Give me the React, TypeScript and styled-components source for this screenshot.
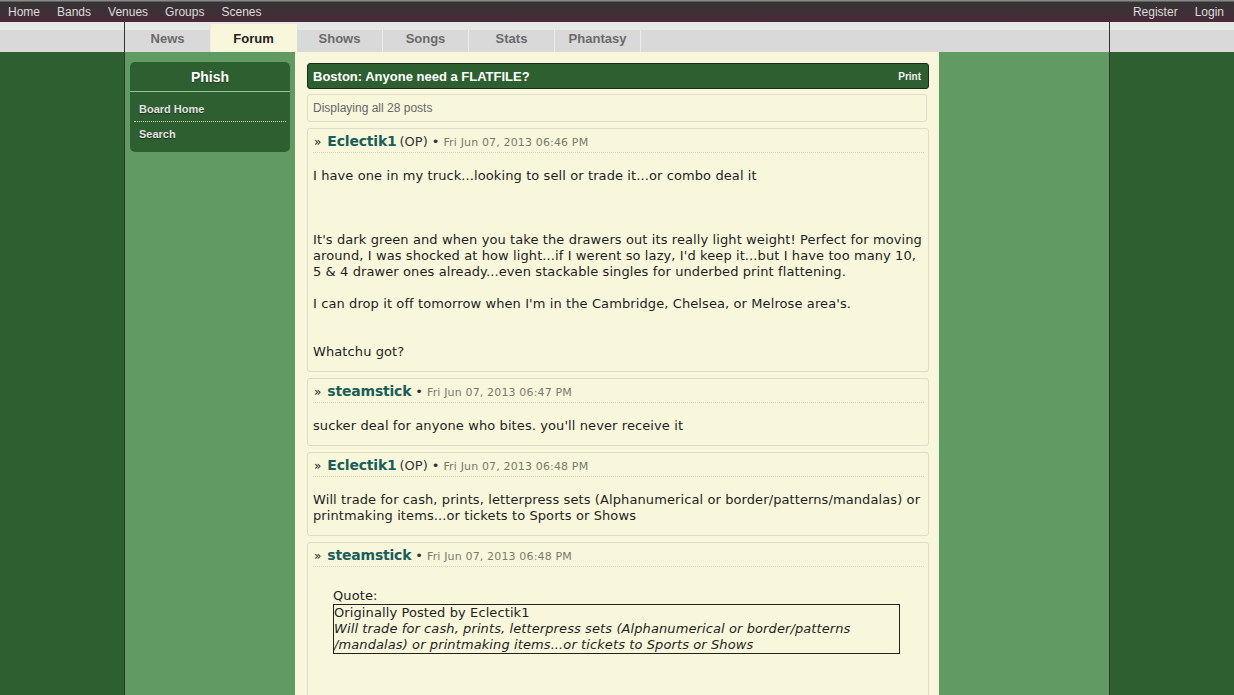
import React from "react";
import styled, { createGlobalStyle } from "styled-components";

const Global = createGlobalStyle`
  html, body { margin: 0; padding: 0; }
  body {
    background: linear-gradient(to bottom, #3a3838 0, #472a36 22px, #e6e8e6 22px, #e6e8e6 30px, #d9d9d9 30px, #d9d9d9 52px, #2e5f30 52px);
    min-height: 695px;
    font-family: "Liberation Sans", Arial, sans-serif;
  }
`;

const TopBar = styled.div`
  height: 22px;
  display: flex;
  align-items: center;
  justify-content: space-between;
  background: linear-gradient(to bottom, #8a8a8a 0, #8a8a8a 1px, #353535 2px, #482a37 22px);
`;

const NavGroup = styled.div`
  display: flex;
  padding-right: 1px;
`;

const NavLink = styled.a`
  color: #dcdcdc;
  font-size: 12px;
  padding: 1px 8px 0;
  line-height: 22px;
  text-decoration: none;
  margin-right: 1px;
`;

const Container = styled.div`
  width: 984px;
  margin: 0 auto;
  border-left: 1px solid #333;
  border-right: 1px solid #333;
  min-height: 673px;
  background: linear-gradient(to bottom, #e6e8e6 0, #e6e8e6 8px, #d9d9d9 8px, #d9d9d9 30px, transparent 30px);
`;

const Tabs = styled.div`
  display: flex;
  align-items: flex-end;
  height: 30px;
`;

const Tab = styled.div<{ $active?: boolean }>`
  width: 86px;
  box-sizing: border-box;
  text-align: center;
  font-size: 13px;
  font-weight: bold;
  line-height: 16px;
  height: ${(p) => (p.$active ? 28 : 22)}px;
  padding-top: ${(p) => (p.$active ? 7 : 1)}px;
  color: ${(p) => (p.$active ? "#222" : "#6a6a6a")};
  background: ${(p) => (p.$active ? "#f8f7dc" : "#d9d9d9")};
  border-right: 1px solid ${(p) => (p.$active ? "#f8f7dc" : "#ececec")};
`;

const Columns = styled.div`
  display: grid;
  grid-template-columns: 170px 644px 170px;
  min-height: 643px;
`;

const SideCol = styled.div`
  background: #629a64;
  padding: 10px 5px 0;
`;

const Main = styled.div`
  background: #f8f7dc;
  padding: 11px 10px 0 12px;
`;

const SideBox = styled.div`
  background: #2e5f30;
  border-radius: 5px;
  padding-bottom: 6px;
`;

const SideHead = styled.div`
  color: #fff;
  font-size: 14px;
  font-weight: bold;
  text-align: center;
  height: 28px;
  padding-top: 1px;
  line-height: 28px;
  border-bottom: 1px solid #93c493;
  text-shadow: 0 1px 1px rgba(0,0,0,0.4);
`;

const SideLinks = styled.div`
  padding-top: 5px;
`;

const SideLink = styled.div<{ $last?: boolean }>`
  margin: 0 4px;
  padding: 0 5px;
  font-size: 11px;
  font-weight: bold;
  color: #e2e2e2;
  line-height: 24px;
  height: 24px;
  text-shadow: 0 1px 1px rgba(0,0,0,0.5);
  border-bottom: ${(p) => (p.$last ? "none" : "1px dotted #cfd8c8")};
`;

const TitleBar = styled.div`
  display: flex;
  justify-content: space-between;
  align-items: center;
  height: 24px;
  background: #2e5f30;
  border: 1px solid #1b2b1b;
  border-radius: 3px;
  padding: 0 7px 0 5px;
  color: #fff;
  font-weight: bold;
`;

const Title = styled.span`
  font-size: 13px;
`;

const PrintLink = styled.span`
  font-size: 10px;
  color: #f0f0f0;
`;

const InfoBox = styled.div`
  margin: 5px 2px 6px 0;
  height: 26px;
  line-height: 26px;
  border: 1px solid #dcdcc8;
  border-radius: 3px;
  padding-left: 5px;
  font-size: 12px;
  color: #666;
`;

const Post = styled.div`
  border: 1px solid #dcdcc8;
  border-radius: 3px;
  margin-bottom: 6px;
  font-family: Verdana, "DejaVu Sans", sans-serif;
`;

const PostHead = styled.div`
  margin: 0 4px 0 5px;
  padding: 4px 0 3px 1px;
  line-height: 16px;
  height: 16px;
  border-bottom: 1px dotted #d6d6c0;
  display: flex;
  align-items: baseline;
  white-space: nowrap;
`;

const Raquo = styled.span`
  font-size: 12px;
  color: #222;
  margin-right: 6px;
`;

const Author = styled.span`
  font-size: 14px;
  font-weight: bold;
  color: #1b5d5b;
  letter-spacing: -0.2px;
`;

const OP = styled.span`
  font-size: 13px;
  color: #333;
  margin-left: 3px;
`;

const Dot = styled.span`
  font-size: 13px;
  color: #333;
  margin: 0 4px;
`;

const Date = styled.span`
  font-size: 11px;
  color: #7a7a6a;
  letter-spacing: 0.15px;
`;

const PostBody = styled.div`
  padding: 15px 6px 11px 5px;
  font-size: 13px;
  line-height: 16px;
  letter-spacing: 0.1px;
  color: #1e1e1e;
`;

const QuoteWrap = styled.div`
  margin: 6px 22px 40px 20px;
`;

const QuoteBox = styled.div`
  border: 1px solid #222;
  padding: 0;
`;

const Italic = styled.div`
  font-style: italic;
`;

type P = { author: string; op?: boolean; date: string; children: React.ReactNode };

function PostItem({ author, op, date, children }: P) {
  return (
    <Post>
      <PostHead>
        <Raquo>»</Raquo>
        <Author>{author}</Author>
        {op && <OP>(OP)</OP>}
        <Dot>•</Dot>
        <Date>{date}</Date>
      </PostHead>
      <PostBody>{children}</PostBody>
    </Post>
  );
}

export default function App() {
  const tabs = ["News", "Forum", "Shows", "Songs", "Stats", "Phantasy"];
  return (
    <>
      <Global />
      <TopBar>
        <NavGroup>
          {["Home", "Bands", "Venues", "Groups", "Scenes"].map((n) => (
            <NavLink key={n}>{n}</NavLink>
          ))}
        </NavGroup>
        <NavGroup>
          <NavLink>Register</NavLink>
          <NavLink>Login</NavLink>
        </NavGroup>
      </TopBar>
      <Container>
        <Tabs>
          {tabs.map((t) => (
            <Tab key={t} $active={t === "Forum"}>{t}</Tab>
          ))}
        </Tabs>
        <Columns>
          <SideCol>
            <SideBox>
              <SideHead>Phish</SideHead>
              <SideLinks>
                <SideLink>Board Home</SideLink>
                <SideLink $last>Search</SideLink>
              </SideLinks>
            </SideBox>
          </SideCol>
          <Main>
            <TitleBar>
              <Title>Boston: Anyone need a FLATFILE?</Title>
              <PrintLink>Print</PrintLink>
            </TitleBar>
            <InfoBox>Displaying all 28 posts</InfoBox>
            <PostItem author="Eclectik1" op date="Fri Jun 07, 2013 06:46 PM">
              I have one in my truck...looking to sell or trade it...or combo deal it
              <br /><br /><br /><br />
              It's dark green and when you take the drawers out its really light weight! Perfect for moving around, I was shocked at how light...if I werent so lazy, I'd keep it...but I have too many 10, 5 &amp; 4 drawer ones already...even stackable singles for underbed print flattening.
              <br /><br />
              I can drop it off tomorrow when I'm in the Cambridge, Chelsea, or Melrose area's.
              <br /><br /><br />
              Whatchu got?
            </PostItem>
            <PostItem author="steamstick" date="Fri Jun 07, 2013 06:47 PM">
              sucker deal for anyone who bites. you'll never receive it
            </PostItem>
            <PostItem author="Eclectik1" op date="Fri Jun 07, 2013 06:48 PM">
              Will trade for cash, prints, letterpress sets (Alphanumerical or border/patterns/mandalas) or printmaking items...or tickets to Sports or Shows
            </PostItem>
            <PostItem author="steamstick" date="Fri Jun 07, 2013 06:48 PM">
              <QuoteWrap>
                Quote:
                <QuoteBox>
                  Originally Posted by Eclectik1
                  <Italic>
                    Will trade for cash, prints, letterpress sets (Alphanumerical or border/patterns /mandalas) or printmaking items...or tickets to Sports or Shows
                  </Italic>
                </QuoteBox>
              </QuoteWrap>
            </PostItem>
          </Main>
          <SideCol />
        </Columns>
      </Container>
    </>
  );
}
